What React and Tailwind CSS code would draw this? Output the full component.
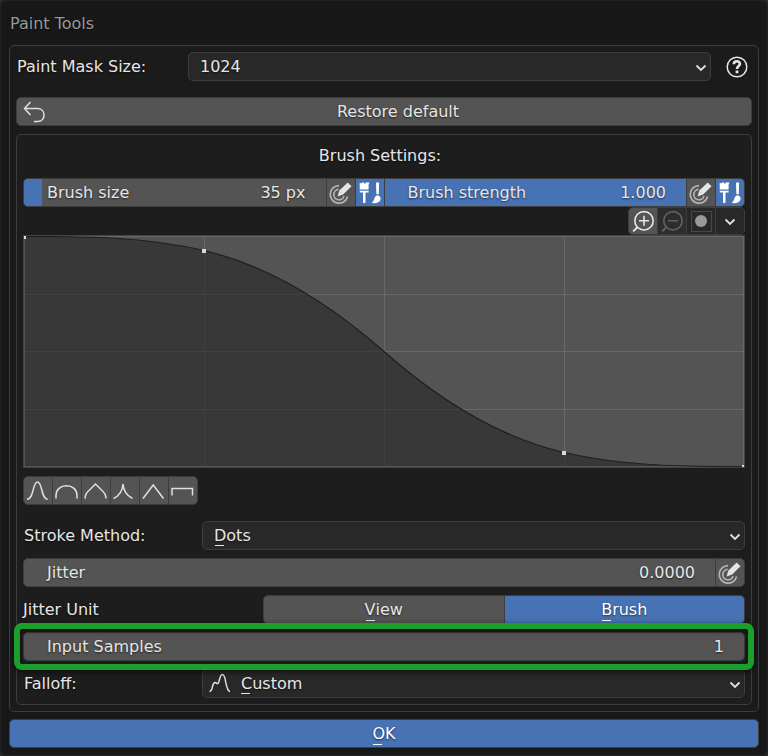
import { useState } from "react";

const TEXT_SHADOW = "[text-shadow:0_1px_2px_rgba(0,0,0,0.6)]";

function ChevronIcon() {
  return (
    <svg viewBox="0 0 12 12" className="pointer-events-none absolute right-1 top-1/2 size-3 -translate-y-1/2" fill="none" stroke="#e0e0e0" strokeWidth="1.8" aria-hidden="true">
      <path d="M1.500 4.500 6 9 10.500 4.500" />
    </svg>
  );
}

function PressureIcon() {
  return (
    <svg viewBox="0 0 28 28" className="size-7" fill="none" aria-hidden="true">
      <g stroke="#b4b4b4" strokeWidth="1.7">
        <path d="M12 6.6A8.8 8.8 0 1 0 20.6 17.5" />
        <path d="M11.6 10.4A5.2 5.2 0 1 0 17 17" />
      </g>
      <path d="M10.6 17.4 12.200 11.8 16 15.6Z" fill="#e6e6e6" />
      <path d="M14 13.800 22.600 5.400" stroke="#e6e6e6" strokeWidth="5.4" />
    </svg>
  );
}

function BrushesIcon() {
  return (
    <svg viewBox="0 0 28 28" className="size-7" fill="#fff" aria-hidden="true">
      <path d="M3.7 3.5 5 4.6 6.2 3.5H8L8.6 5 10 3.5H13.4L12.6 5.8V10.5H3.7Z" />
      <path d="M3.7 11.8H12.6V13.4H9.5V23.6Q8.2 24.8 7 23.6V13.4H3.7Z" />
      <path d="M20 4Q21.6 2.6 23.100 4L22.8 15.200H20.4Z" />
      <path d="M20.6 16.4H22.9Q25.200 18.2 24.6 20.4C23.4 23.8 19.4 24.8 15.2 23.7 18.8 22.6 17.4 18.2 20.6 16.4Z" />
    </svg>
  );
}

function MagnifierIcon({ plus }) {
  return (
    <svg viewBox="0 0 28 28" className="size-7" fill="none" stroke="currentColor" strokeWidth="1.6" aria-hidden="true">
      <circle cx="15" cy="12.8" r="9.2" />
      <path d="M8.4 19.2 4.2 23.4" strokeWidth="2" />
      <path d="M10 12.8h10" />
      {plus && <path d="M15 7.8v10" />}
    </svg>
  );
}

function Slider({ id, label, value, min, max, step, format, fill }) {
  const [current, setCurrent] = useState(value);
  return (
    <div className="relative flex flex-1 items-center bg-[#545454]">
      <div className="absolute inset-y-0 left-0 bg-[#4772b3]" style={{ width: `${fill(current)}%` }} />
      <label htmlFor={id} className={`relative flex-1 pl-[23px] ${TEXT_SHADOW}`}>{label}</label>
      <output htmlFor={id} className={`relative pr-5 ${TEXT_SHADOW}`}>{format(current)}</output>
      <input id={id} type="range" min={min} max={max} step={step} value={current} onChange={(e) => setCurrent(Number(e.target.value))} className="absolute inset-0 size-full cursor-ew-resize opacity-0" />
    </div>
  );
}

function SliderButtons({ name }) {
  return (
    <>
      <button type="button" aria-label={`${name} pressure`} className="w-7 bg-[#545454]"><PressureIcon /></button>
      <button type="button" aria-label={`${name} unified`} aria-pressed="true" className="w-7 bg-[#4772b3]"><BrushesIcon /></button>
    </>
  );
}

function Dropdown({ id, options, icon, mnemonic }) {
  return (
    <div className="relative h-[29px] flex-1">
      <select id={id} className={`size-full appearance-none rounded-[5px] border border-[#3d3d3d] bg-[#282828] ${icon ? "pl-[38px]" : "pl-[11px]"} ${TEXT_SHADOW}`}>
        {options.map((option) => <option key={option}>{option}</option>)}
      </select>
      {icon}
      {mnemonic && <span className={`absolute bottom-1 h-px w-[9px] bg-[#e6e6e6] ${icon ? "left-[39px]" : "left-[13px]"}`} />}
      <ChevronIcon />
    </div>
  );
}

function Mnemonic({ children }) {
  return (
    <span className="relative">
      {children}
      <span className="absolute bottom-[-1px] left-px h-px w-[9px] bg-current" />
    </span>
  );
}

const CURVE = "M0 .5C60 .5 120 .5 180 14.500C240 28.500 300 62.500 360 115.500C420 168.500 480 202.500 540 216.500C600 230.500 660 230.500 720 230.500";
const GRID = "M180.500 0V231M360.500 0V231M540.500 0V231M0 58.500H720M0 115.500H720M0 173.500H720M.5 .5H719.500V230.500H.5Z";

function CurveEditor() {
  return (
    <div className="h-[233px] border border-[#444] bg-[#545454]">
      <svg viewBox="0 0 720 231" preserveAspectRatio="none" className="block size-full" fill="none" role="img" aria-label="Falloff curve">
        <path d={GRID} stroke="#666" />
        <path d={`${CURVE}V231H0Z`} fill="#383838" />
        <path d={GRID} stroke="#777" strokeOpacity="0.14" />
        <path d="M.5 1V230.500H719" stroke="#555" />
        <path d={CURVE} stroke="#1f1f1f" strokeWidth="1.200" />
        <g fill="#d9d9d9">
          <path d="M0 0h2v3H0z" />
          <path d="M178 13h4v4h-4z" />
          <path d="M538 215h4v4h-4z" />
          <path d="M718 229h2v2h-2z" />
        </g>
      </svg>
    </div>
  );
}

const PRESETS = [
  ["Smooth", "M4 22.300C11 22.300 9.500 5 14.500 5C19.500 5 18 22.300 24.700 22.300"],
  ["Sphere", "M4 21.500V18.500C4 12.500 8.500 8.700 14.500 8.700C20.500 8.700 25 12.500 25 18.500V21.500"],
  ["Root", "M4 21.500C4 17 6 15 9 12.500L14.500 7L20 12.500C23 15 25 17 25 21.500"],
  ["Sharp", "M3.500 21.500C10 18.500 12.500 14 13 7C13.500 14 16.500 18.500 22.500 21.500"],
  ["Linear", "M4 21.500 14.200 8 24.500 21.500"],
  ["Constant", "M4 18.500V11.500H24.500V18.500"],
];

export default function App() {
  return (
    <div className="bg-[#2a2a2a] font-['DejaVu_Sans',sans-serif] text-[16px] leading-5 text-[#e6e6e6]">
      <form onSubmit={(e) => e.preventDefault()} className="rounded-[6px] border border-[#222] bg-[#181818] px-2 pb-[7px]">
        <h1 className={`flex h-11 items-center px-px pt-0.5 text-[#999] ${TEXT_SHADOW}`}>Paint Tools</h1>

        <section className="rounded-[5px] border border-[#3d3d3d] bg-[#1b1b1b] p-[6px]">
          <div className="flex items-center">
            <label htmlFor="mask-size" className={`w-[172px] pl-px ${TEXT_SHADOW}`}>Paint Mask Size:</label>
            <Dropdown id="mask-size" options={["1024", "2048", "4096"]} />
            <button type="button" aria-label="Help" className="ml-[15px] mr-1 size-[22px]">
              <svg viewBox="0 0 22 22" className="size-full" fill="none" stroke="#e6e6e6" aria-hidden="true">
                <circle cx="11" cy="11" r="9.800" strokeWidth="1.500" />
                <path d="M7.800 8.200C8 4.200 14 4.500 13.900 8C13.800 10 11 10.200 11 13" strokeWidth="2.600" />
                <path d="M9.600 14.500h2.800v2.800H9.600z" fill="#e6e6e6" stroke="none" />
              </svg>
            </button>
          </div>

          <button type="button" className={`relative mt-4 flex h-[29px] w-full items-center justify-center rounded-[5px] border border-[#3d3d3d] bg-[#545454] pl-7 ${TEXT_SHADOW}`}>
            <svg viewBox="0 0 24 24" className="absolute left-[5px] top-[2px] size-6" fill="none" stroke="#e0e0e0" strokeWidth="1.500" aria-hidden="true">
              <path d="M8.500 2 2.500 8.500 8.500 15M2.500 8.500H16C24 9 24 21 16 21.500H12" />
            </svg>
            Restore default
          </button>

          <section className="mt-2 rounded-[5px] border border-[#3d3d3d] bg-[#1d1d1d] p-[6px]">
            <h2 className={`flex h-[29px] items-center justify-center pr-2 ${TEXT_SHADOW}`}>Brush Settings:</h2>

            <div className="mt-2 flex h-[29px] gap-px overflow-hidden rounded-[5px] border border-[#3d3d3d] bg-[#3d3d3d]">
              <Slider id="brush-size" label="Brush size" value={35} min={1} max={583} step={1} format={(v) => `${v} px`} fill={(v) => v / 5.83} />
              <SliderButtons name="Brush size" />
              <Slider id="brush-strength" label="Brush strength" value={1} min={0} max={1} step={0.001} format={(v) => v.toFixed(3)} fill={(v) => v * 100} />
              <SliderButtons name="Brush strength" />
            </div>

            <div className="flex justify-end">
              <div className="flex h-7 gap-px overflow-hidden rounded-[5px] border border-[#3d3d3d] bg-[#3d3d3d]">
                <button type="button" aria-label="Zoom in" className="w-7 bg-[#545454]"><MagnifierIcon plus /></button>
                <button type="button" aria-label="Zoom out" disabled className="w-7 bg-[#2d2d2d] text-[#626262]"><MagnifierIcon /></button>
                <button type="button" aria-label="Clipping" className="flex w-7 items-center justify-center bg-[#282828]">
                  <span className="flex size-[21px] items-center justify-center border border-[#484848]">
                    <span className="size-3 rounded-full bg-[#999]" />
                  </span>
                </button>
                <button type="button" aria-label="Curve tools" className="flex w-7 items-center justify-center bg-[#282828]">
                  <svg viewBox="0 0 12 12" className="size-3" fill="none" stroke="#e0e0e0" strokeWidth="1.800" aria-hidden="true">
                    <path d="M1.500 4.500 6 9 10.500 4.500" />
                  </svg>
                </button>
              </div>
            </div>

            <CurveEditor />

            <div className="mt-2 flex">
              <div className="flex h-[29px] gap-px overflow-hidden rounded-[5px] border border-[#3d3d3d] bg-[#3d3d3d]">
                {PRESETS.map(([name, path]) => (
                  <button key={name} type="button" aria-label={name} className="w-7 bg-[#545454]">
                    <svg viewBox="1 0 28 28" className="size-7" fill="none" stroke="#e0e0e0" strokeWidth="1.500" aria-hidden="true">
                      <path d={path} />
                    </svg>
                  </button>
                ))}
              </div>
            </div>

            <div className="mt-4 flex items-center">
              <label htmlFor="stroke-method" className={`w-[179px] pl-px ${TEXT_SHADOW}`}>Stroke Method:</label>
              <Dropdown id="stroke-method" options={["Dots", "Space", "Line"]} mnemonic />
            </div>

            <div className="mt-2 flex h-[29px] gap-px overflow-hidden rounded-[5px] border border-[#3d3d3d] bg-[#3d3d3d]">
              <div className="flex flex-1 items-center bg-[#545454] pl-[23px] pr-5">
                <label htmlFor="jitter" className={`flex-1 ${TEXT_SHADOW}`}>Jitter</label>
                <input id="jitter" type="text" inputMode="decimal" defaultValue="0.0000" className={`w-24 text-right ${TEXT_SHADOW}`} />
              </div>
              <button type="button" aria-label="Jitter pressure" className="w-7 bg-[#545454]"><PressureIcon /></button>
            </div>

            <div className="mt-2 flex items-center" role="radiogroup" aria-labelledby="jitter-unit">
              <span id="jitter-unit" className={`w-60 ${TEXT_SHADOW}`}>Jitter Unit</span>
              <div className={`grid h-[29px] flex-1 grid-cols-2 gap-px overflow-hidden rounded-[5px] border border-[#3d3d3d] bg-[#3d3d3d] ${TEXT_SHADOW}`}>
                <label className="flex items-center justify-center bg-[#545454] has-checked:bg-[#4772b3] has-checked:text-white">
                  <input type="radio" name="jitter-unit" className="sr-only" />
                  <Mnemonic>V</Mnemonic>iew
                </label>
                <label className="flex items-center justify-center bg-[#545454] has-checked:bg-[#4772b3] has-checked:text-white">
                  <input type="radio" name="jitter-unit" defaultChecked className="sr-only" />
                  <Mnemonic>B</Mnemonic>rush
                </label>
              </div>
            </div>

            <div className="relative z-10 mt-2 flex h-[29px] items-center rounded-[5px] border border-[#3d3d3d] bg-[#545454] pl-[23px] pr-5">
              <div className="pointer-events-none absolute -inset-[10px] rounded-[8px] border-6 border-[#1c9e2b] shadow-[0_2px_6px_rgba(0,0,0,0.6),inset_0_2px_5px_rgba(0,0,0,0.6)]" />
              <label htmlFor="input-samples" className={`flex-1 ${TEXT_SHADOW}`}>Input Samples</label>
              <input id="input-samples" type="text" inputMode="numeric" defaultValue="1" className={`w-24 text-right ${TEXT_SHADOW}`} />
            </div>

            <div className="mt-2 flex items-center">
              <label htmlFor="falloff" className={`w-[179px] pl-px ${TEXT_SHADOW}`}>Falloff:</label>
              <Dropdown
                id="falloff"
                options={["Custom", "Smooth", "Sphere"]}
                mnemonic
                icon={
                  <svg viewBox="0 0 28 28" className="pointer-events-none absolute left-[3px] top-0 size-7" fill="none" stroke="#e0e0e0" strokeWidth="1.500" aria-hidden="true">
                    <path d="M4.500 22.500C8.500 22 6.500 13.500 10 13.500C12 13.500 11.500 15.500 13 14.500C15 12 14.500 5.500 17.500 5.500C21.500 5.500 20 22 25 22.500" />
                  </svg>
                }
              />
            </div>
          </section>
        </section>

        <button type="submit" className={`mt-[7px] flex h-[29px] w-full items-center justify-center rounded-[5px] border border-[#3d3d3d] bg-[#4772b3] text-white ${TEXT_SHADOW}`}>
          <Mnemonic>O</Mnemonic>K
        </button>
      </form>
    </div>
  );
}
